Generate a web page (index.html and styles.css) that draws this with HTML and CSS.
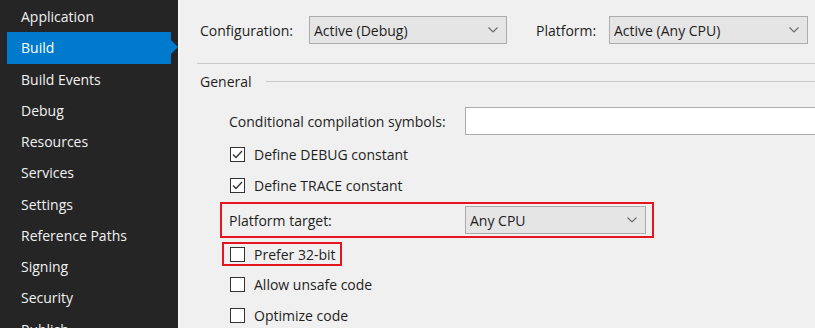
FILE: index.html
```html
<!DOCTYPE html>
<html>
<head>
<meta charset="utf-8">
<link rel="stylesheet" href="styles.css">
</head>
<body>
<div class="app">
  <nav class="sidebar">
    <div class="nav-item">Application</div>
    <div class="nav-item active">Build</div>
    <div class="nav-item">Build Events</div>
    <div class="nav-item">Debug</div>
    <div class="nav-item">Resources</div>
    <div class="nav-item">Services</div>
    <div class="nav-item">Settings</div>
    <div class="nav-item">Reference Paths</div>
    <div class="nav-item">Signing</div>
    <div class="nav-item">Security</div>
    <div class="nav-item">Publish</div>
  </nav>
  <main class="main">
    <div class="toprow">
      <span class="lbl lbl-config">Configuration:</span>
      <div class="select sel-config"><span>Active (Debug)</span><svg class="chev" width="10" height="6" viewBox="0 0 10 6"><path d="M0.5 0.5 L5 5 L9.5 0.5" fill="none" stroke="#6d6d6d" stroke-width="1.2"/></svg></div>
      <span class="lbl lbl-platform">Platform:</span>
      <div class="select sel-platform"><span>Active (Any CPU)</span><svg class="chev" width="10" height="6" viewBox="0 0 10 6"><path d="M0.5 0.5 L5 5 L9.5 0.5" fill="none" stroke="#6d6d6d" stroke-width="1.2"/></svg></div>
    </div>
    <div class="sep"></div>
    <div class="group-header"><span>General</span><div class="group-line"></div></div>
    <div class="content">
      <div class="row-input">
        <span class="lbl lbl-wide">Conditional compilation symbols:</span>
        <div class="textbox"></div>
      </div>
      <div class="checkrow first">
        <span class="cb"><svg width="13" height="13" viewBox="0 0 13 13"><path d="M2 6.5 L5 9.5 L11 3" fill="none" stroke="#333" stroke-width="1.3"/></svg></span>
        <span>Define DEBUG constant</span>
      </div>
      <div class="checkrow">
        <span class="cb"><svg width="13" height="13" viewBox="0 0 13 13"><path d="M2 6.5 L5 9.5 L11 3" fill="none" stroke="#333" stroke-width="1.3"/></svg></span>
        <span>Define TRACE constant</span>
      </div>
      <div class="highlight hl-platform">
        <span class="lbl lbl-wide2">Platform target:</span>
        <div class="select sel-target"><span>Any CPU</span><svg class="chev" width="10" height="6" viewBox="0 0 10 6"><path d="M0.5 0.5 L5 5 L9.5 0.5" fill="none" stroke="#6d6d6d" stroke-width="1.2"/></svg></div>
      </div>
      <div class="highlight hl-prefer">
        <span class="cb"></span>
        <span>Prefer 32-bit</span>
      </div>
      <div class="checkrow after">
        <span class="cb"></span>
        <span>Allow unsafe code</span>
      </div>
      <div class="checkrow">
        <span class="cb"></span>
        <span>Optimize code</span>
      </div>
    </div>
  </main>
</div>
</body>
</html>
```

FILE: styles.css
```css
* { box-sizing: border-box; }
html, body { margin: 0; padding: 0; }
html { overflow: hidden; }
body {
  width: 815px;
  height: 328px;
  overflow: hidden;
  font-family: "Segoe UI", "Open Sans", sans-serif;
  font-size: 14px;
  color: #1e1e1e;
  background: #f0f0f0;
}
.app { display: flex; height: 328px; overflow: hidden; }
.sidebar {
  width: 178px;
  flex: none;
  background: #252526;
  padding-top: 1px;
  overflow: hidden;
}
.nav-item {
  height: 31.25px;
  line-height: 31px;
  color: #f1f1f1;
  margin-left: 7px;
  margin-right: 7px;
  padding-left: 14px;
  position: relative;
  white-space: nowrap;
}
.nav-item.active { background: #007acc; color: #fff; }
.nav-item.active::after {
  content: "";
  position: absolute;
  right: -7px;
  top: 8px;
  border-left: 7px solid #007acc;
  border-top: 7px solid transparent;
  border-bottom: 7px solid transparent;
}
.main {
  flex: 1;
  overflow: hidden;
  padding-top: 16px;
  border-left: 2px solid #f7f7f7;
}
.toprow { display: flex; align-items: center; height: 28px; padding-left: 20px; }
.lbl { white-space: nowrap; flex: none; }
.lbl-config { width: 109px; }
.lbl-platform { width: 73px; margin-left: 29px; }
.select {
  flex: none;
  height: 28px;
  background: #e5e5e5;
  border: 1px solid #acacac;
  display: flex;
  align-items: center;
  justify-content: space-between;
  padding: 0 8px 0 4px;
}
.sel-config { width: 198px; }
.sel-platform { width: 199px; }
.sep { height: 1px; background: #c9c9c9; margin: 19px 0 0 17px; }
.group-header { height: 34px; display: flex; align-items: center; padding-left: 20px; }
.group-line { flex: 1; height: 1px; background: #c9c9c9; margin-left: 14px; }
.content { padding-left: 49px; }
.row-input { display: flex; align-items: center; height: 28px; margin-top: 9px; }
.lbl-wide { width: 236px; }
.textbox { width: 400px; height: 28px; background: #fff; border: 1px solid #acacac; flex: none; }
.checkrow { display: flex; align-items: center; height: 31px; padding-left: 1px; }
.checkrow.first { margin-top: 4px; }
.checkrow.after { margin-top: 3px; }
.cb {
  width: 15px;
  height: 15px;
  border: 1px solid #333;
  background: #fff;
  margin-right: 9px;
  flex: none;
  display: flex;
  align-items: center;
  justify-content: center;
}
.highlight { border: 2px solid #e3151e; display: flex; align-items: center; }
.hl-platform {
  width: 434px;
  height: 36px;
  margin-left: -9px;
  margin-top: 1px;
  padding-left: 7px;
}
.lbl-wide2 { width: 236px; }
.sel-target { width: 181px; }
.hl-prefer {
  width: 120px;
  height: 24px;
  margin-left: -7px;
  margin-top: 4px;
  padding-left: 6px;
}
```
